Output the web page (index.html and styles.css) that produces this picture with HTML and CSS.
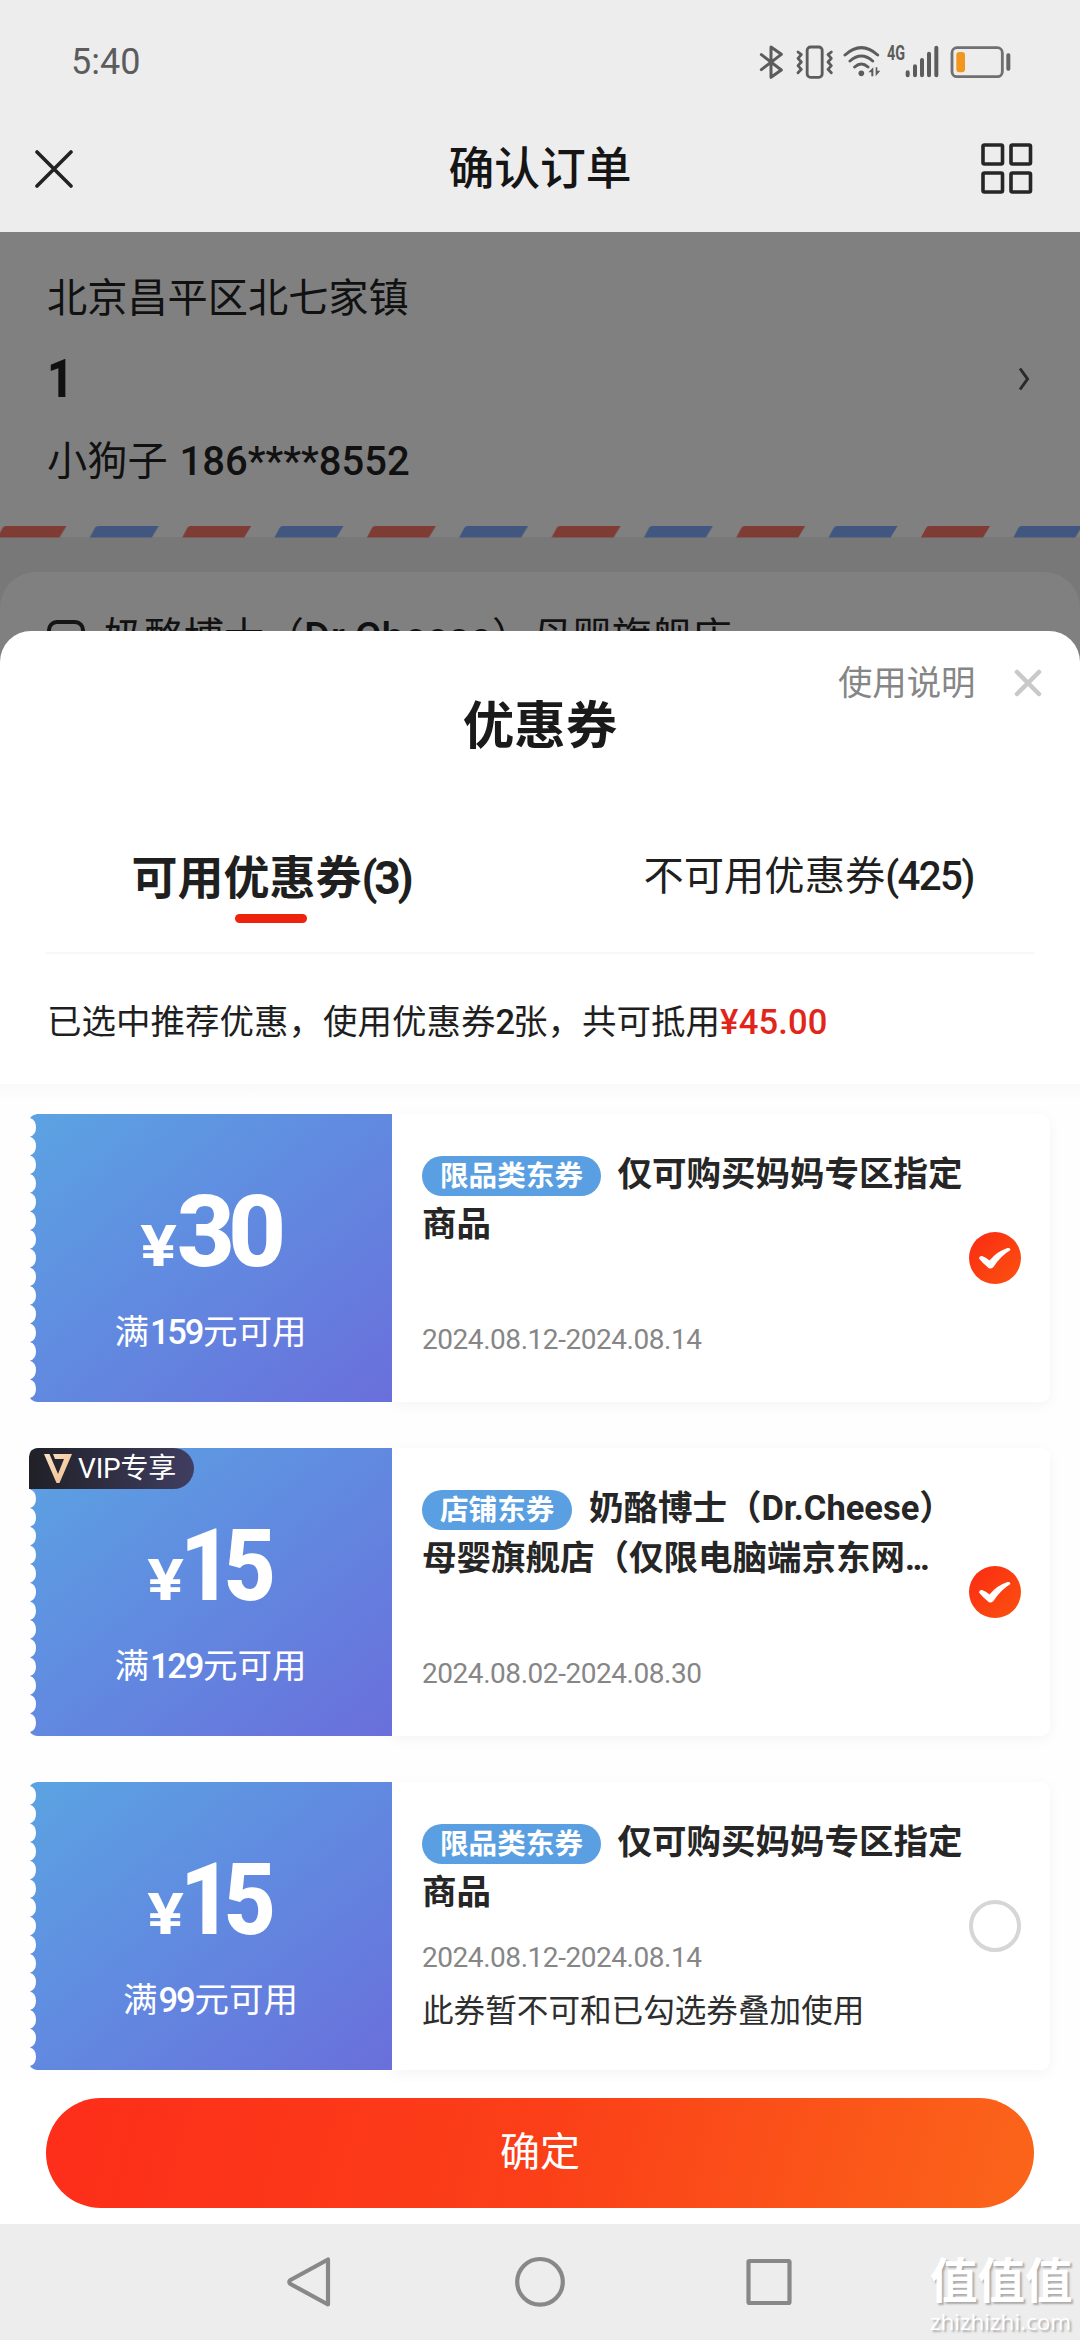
FILE: index.html
```html
<!DOCTYPE html>
<html lang="zh-CN">
<head>
<meta charset="utf-8">
<title>确认订单</title>
<link rel="stylesheet" href="styles.css">
</head>
<body>
<svg class="defs" width="0" height="0" aria-hidden="true">
  <defs>
    <linearGradient id="ticketFill" x1="0" y1="0" x2="1" y2="1">
      <stop offset="0" stop-color="#5ba3e2"/>
      <stop offset="0.5" stop-color="#6189e0"/>
      <stop offset="1" stop-color="#6a6fdb"/>
    </linearGradient>
    <linearGradient id="checkFill" x1="0" y1="0" x2="1" y2="1">
      <stop offset="0" stop-color="#fb2a12"/>
      <stop offset="1" stop-color="#fb5210"/>
    </linearGradient>
    <linearGradient id="vipFill" x1="0" y1="0" x2="1" y2="1">
      <stop offset="0" stop-color="#fbe3c4"/>
      <stop offset="1" stop-color="#eebb8c"/>
    </linearGradient>
    <symbol id="ticket" viewBox="0 0 363 288">
      <path fill="url(#ticketFill)" d="M8 0H363V288H8Q3 287 1 284q6-2 6-9.3t-6-9.3q6-2 6-9.4t-6-9.3q6-2 6-9.3t-6-9.4q6-2 6-9.3t-6-9.3q6-2 6-9.4t-6-9.3q6-2 6-9.3t-6-9.4q6-2 6-9.3t-6-9.3q6-2 6-9.4t-6-9.3q6-2 6-9.3t-6-9.4q6-2 6-9.3t-6-9.3q6-2 6-9.4t-6-9.3q6-2 6-9.3t-6-9.4q6-2 6-9.3t-6-9.3q6-2 6-9.4t-6-9.3q6-2 6-9.3t-6-9.3Q3 1 8 0Z"/>
    </symbol>
    <symbol id="check" viewBox="0 0 52 52">
      <circle cx="26" cy="26" r="26" fill="url(#checkFill)"/>
      <path fill="#fff" d="M10 26.500q0-3 3-2.500 4 1 7.500 4.500 8-9.500 18-12.500 3-.5 3 2-10 6-17 17-3.500 3-6 0-5-4-8.500-8.500Z"/>
    </symbol>
  </defs>
</svg>

<div class="screen">
  <header class="top">
    <div class="status">
      <span class="clock">5:40</span>
      <div class="status-icons">
        <svg width="27" height="36" viewBox="110 70 81 108" fill="none" stroke="#5c5c5c" stroke-width="9" stroke-linecap="round" stroke-linejoin="round"><path d="M120 102L180 148 149 170V79L180 101 120 147"/></svg>
        <svg class="vibrate" width="40" height="36" viewBox="220 70 120 108" fill="none" stroke="#5c5c5c" stroke-width="8.500" stroke-linecap="round" stroke-linejoin="round"><rect x="256.500" y="79" width="45" height="91" rx="10"/><path d="M229 94l10 8-10 11 10 11-10 11 10 11-10 10M329 94l-10 8 10 11-10 11 10 11-10 11 10 10"/></svg>
        <svg class="wifi" width="40" height="36" viewBox="362 70 120 108"><g fill="none" stroke="#5c5c5c" stroke-width="9" stroke-linecap="round"><path d="M371 103Q420 59 469 103M386 121Q420 91 454 121M400 139Q420 121 440 139"/></g><circle cx="420" cy="158" r="8.500" fill="#5c5c5c"/><path d="M456 140v27h-6v-12h-9ZM463 167v-27h5v10h9Z" fill="#5c5c5c"/></svg>
        <span class="net">4G</span>
        <svg class="signal" width="34" height="36" viewBox="552 70 102 108" stroke="#5c5c5c" stroke-width="12" stroke-linecap="round"><path d="M560 155v9M582 137v27M603 118v46M624 99v65M646 81v83"/></svg>
        <svg class="battery" width="62" height="36" viewBox="688 70 186 108"><rect x="694" y="81" width="151" height="87" rx="15" fill="none" stroke="#707070" stroke-width="8.500"/><rect x="707" y="94" width="26" height="61" rx="9" fill="#f3961e"/><rect x="857" y="98" width="12" height="52" rx="5" fill="#666"/></svg>
      </div>
    </div>
    <div class="navbar">
      <svg width="38" height="38" viewBox="0 0 38 38" fill="none" stroke="#222" stroke-width="3.600" stroke-linecap="round"><path d="M2 2L36 36M36 2L2 36"/></svg>
      <h1>确认订单</h1>
      <svg width="52" height="52" viewBox="0 0 52 52" fill="none" stroke="#262626" stroke-width="3.600"><rect x="2" y="2" width="19.500" height="19" rx="1.500"/><rect x="30" y="2" width="19.500" height="19" rx="1.500"/><rect x="2" y="30" width="19.500" height="19" rx="1.500"/><rect x="30" y="30" width="19.500" height="19" rx="1.500"/></svg>
    </div>
  </header>

  <section class="backdrop">
    <div class="address">
      <div class="region">北京昌平区北七家镇</div>
      <div class="door"><b>1</b>
        <svg width="12" height="24" viewBox="0 0 12 24" fill="none" stroke="#2a2a2a" stroke-width="3"><path d="M2 1.500L9.500 12 2 22.500"/></svg>
      </div>
      <div class="person">小狗子 <b>186****8552</b></div>
      <svg class="airmail" width="1080" height="12" viewBox="0 0 1080 12">
        <defs><pattern id="mail" x="-2.500" width="184.700" height="12" patternUnits="userSpaceOnUse"><path fill="#7f3c35" d="M0 11.500L5 2Q6 0 8.500 0H69L62 11.500Z"/><path fill="#425780" d="M92.300 11.500L97.300 2Q98.300 0 100.800 0H161.300L154.300 11.500Z"/></pattern></defs>
        <rect width="1080" height="12" fill="url(#mail)"/>
      </svg>
    </div>
    <div class="shop"><span class="box"></span>奶酪博士（<i>Dr.Cheese</i>）母婴旗舰店</div>
  </section>

  <main class="sheet">
    <div class="sheet-tools"><span>使用说明</span>
      <svg width="28" height="28" viewBox="0 0 28 28" stroke="#c9c9c9" stroke-width="4.500" stroke-linecap="round"><path d="M3 3L25 25M25 3L3 25"/></svg>
    </div>
    <h2>优惠券</h2>
    <nav class="tabs">
      <div class="tab active">可用优惠券<span>(3)</span></div>
      <div class="tab">不可用优惠券<span>(425)</span></div>
    </nav>
    <p class="summary">已选中推荐优惠，使用优惠券<span>2</span>张，共可抵用<strong>¥45.00</strong></p>

    <div class="list">
      <article class="coupon">
        <div class="value">
          <svg class="shape" width="363" height="288"><use href="#ticket"/></svg>
          <div class="amount"><small>¥</small><b>30</b></div>
          <div class="rule">满<i>159</i>元可用</div>
        </div>
        <div class="info">
          <div class="text">
            <h3><em>限品类东券</em>仅可购买妈妈专区指定<br>商品</h3>
            <time>2024.08.12-2024.08.14</time>
          </div>
          <svg class="pick" width="52" height="52"><use href="#check"/></svg>
        </div>
      </article>

      <article class="coupon">
        <div class="value">
          <svg class="shape" width="363" height="288"><use href="#ticket"/></svg>
          <div class="vip"><svg width="28" height="29" viewBox="0 0 28 29"><path fill="url(#vipFill)" d="M0 0H5.500L14 20 20 5H11L9 0H28L15.500 29H12.500Z"/></svg>VIP专享</div>
          <div class="amount narrow"><small>¥</small><b>15</b></div>
          <div class="rule">满<i>129</i>元可用</div>
        </div>
        <div class="info">
          <div class="text">
            <h3><em>店铺东券</em>奶酪博士（Dr.Cheese）<br>母婴旗舰店（仅限电脑端京东网<span class="more">...</span></h3>
            <time>2024.08.02-2024.08.30</time>
          </div>
          <svg class="pick" width="52" height="52"><use href="#check"/></svg>
        </div>
      </article>

      <article class="coupon">
        <div class="value">
          <svg class="shape" width="363" height="288"><use href="#ticket"/></svg>
          <div class="amount narrow"><small>¥</small><b>15</b></div>
          <div class="rule">满<i>99</i>元可用</div>
        </div>
        <div class="info">
          <div class="text with-note">
            <h3><em>限品类东券</em>仅可购买妈妈专区指定<br>商品</h3>
            <time>2024.08.12-2024.08.14</time>
            <p class="note">此券暂不可和已勾选券叠加使用</p>
          </div>
          <span class="pick ring"></span>
        </div>
      </article>
    </div>

    <div class="footer"><button class="confirm">确定</button></div>
  </main>

  <footer class="keys">
    <svg width="1080" height="60" viewBox="0 2252 1080 60" fill="none" stroke="#888" stroke-width="4.200" stroke-linejoin="round"><path d="M328 2259.500V2304.500L290.500 2284Q288 2282 290.500 2280Z"/><circle cx="540" cy="2281.800" r="22.800"/><rect x="748.500" y="2261" width="41" height="42" rx="1"/></svg>
    <div class="mark"><b>值值值</b><span>zhizhizhi.com</span></div>
  </footer>
</div>
</body>
</html>
```
FILE: styles.css
```css
* { box-sizing: border-box; margin: 0; padding: 0; }
body {
  width: 1080px;
  font-family: Roboto, "Noto Sans CJK SC", sans-serif;
  color: #1f1f1f;
  background: #fff;
}
i, em { font-style: normal; }
svg { display: block; flex: none; }
.defs { position: absolute; }
.screen { width: 1080px; height: 2340px; display: flex; flex-direction: column; overflow: hidden; }

/* status bar and title */
.top { height: 232px; background: #ededed; }
.status { height: 123px; padding: 0 68px 0 71px; display: flex; align-items: center; justify-content: space-between; }
.clock { font-size: 36px; line-height: 40px; color: #5c5c5c; }
.status-icons { display: flex; }
.vibrate { margin-left: 10px; }
.wifi { margin-left: 7px; }
.net { width: 17px; margin-left: 5px; margin-right: 1px; font-size: 20px; line-height: 19px; font-weight: 700; color: #5c5c5c; white-space: nowrap; transform: scaleX(.72); transform-origin: 0 0; }
.battery { margin-left: 11px; }
.navbar { height: 92px; padding: 0 47px 0 35px; display: grid; grid-template-columns: 52px 1fr 52px; align-items: center; }
.navbar h1 { font-size: 45.800px; line-height: 60px; font-weight: 500; text-align: center; padding: 2px 0 0 12px; color: #151515; }

/* dimmed order page */
.backdrop { height: 431px; background: #787878; flex: none; overflow: hidden; color: #111; }
.address { height: 305px; background: #808080; padding-top: 37px; }
.region, .person { padding-left: 47px; font-size: 40.200px; line-height: 60px; }
.door { height: 76px; margin: 12px 50px 0 47px; display: flex; align-items: center; justify-content: space-between; font-size: 54px; line-height: 76px; }
.door b { font-weight: 800; transform: scaleX(.85); transform-origin: 0 50%; }
.person { margin-top: 15px; white-space: nowrap; }
.person b { font-weight: 500; font-size: 40px; margin-left: 2px; letter-spacing: 0; }
.airmail { margin-top: 33.500px; }
.shop { height: 140px; margin-top: 35px; padding: 36px 0 0 47px; border-radius: 36px 36px 0 0; background: #808080; font-size: 40px; line-height: 60px; display: flex; }
.shop i { font-weight: 500; letter-spacing: .7px; }
.box { width: 38px; height: 38px; margin: 12px 19px 0 0; border: 4px solid #151515; border-radius: 10px; }

/* coupon sheet */
.sheet { flex: none; height: 1593px; margin-top: -32px; background: #fff; border-radius: 31px 31px 0 0; display: flex; flex-direction: column; position: relative; overflow: hidden; }
.sheet-tools { height: 60px; margin-top: 22px; padding-right: 38px; display: flex; justify-content: flex-end; align-items: center; gap: 38.500px; font-size: 34.400px; line-height: 60px; color: #868686; }
.sheet h2 { margin-top: -16px; height: 60px; font-size: 51.500px; line-height: 60px; font-weight: 700; text-align: center; color: #1a1a1a; }
.tabs { height: 133px; margin: 64px 45px 0; padding-top: 26px; display: grid; grid-template-columns: 452px 1fr; border-bottom: 2px solid #f8f8f8; }
.tab { font-size: 40.300px; line-height: 60px; text-align: center; white-space: nowrap; }
.tab:last-child { padding-left: 85px; }
.tab span { font-weight: 500; letter-spacing: -1.700px; }
.tab.active { font-size: 46px; font-weight: 700; line-height: 62px; }
.tab.active span { font-weight: 700; letter-spacing: -3.200px; }
.tab.active::after { content: ""; display: block; width: 72px; height: 9px; margin: 5px auto 0; border-radius: 5px; background: #ee230d; }
.summary { height: 130px; padding-left: 47px; font-size: 34.500px; line-height: 137px; white-space: nowrap; }
.summary span { font-weight: 500; letter-spacing: -2px; }
.summary strong { font-weight: 500; color: #e1251b; letter-spacing: .2px; }

.list { height: 997px; padding: 30px 29px 0; display: flex; flex-direction: column; gap: 46px; background: linear-gradient(#f9f9f9, #fefefe 16px); overflow: hidden; }
.coupon { flex: none; height: 288px; display: flex; }
.value { position: relative; width: 363px; color: #fff; text-align: center; }
.shape { position: absolute; left: 0; top: 0; }
.amount, .rule, .vip { position: relative; }
.amount { height: 100px; margin-top: 68px; display: flex; justify-content: center; align-items: baseline; line-height: 100px; }
.amount small { font-size: 58px; font-weight: 700; transform: translateX(-2px) scaleX(1.18); }
.amount b { font-size: 101px; font-weight: 800; letter-spacing: -7px; margin-left: 1px; margin-right: -3px; }
.narrow small { transform: translateX(2px) scaleX(1.18); }
.narrow b { letter-spacing: -10px; transform: scaleX(.9); transform-origin: 0 50%; }
.rule { margin-top: 24px; font-size: 34.500px; line-height: 52px; }
.rule i { font-weight: 500; letter-spacing: -2.200px; margin: 0 1px; }
.vip { width: 165px; height: 41px; margin-bottom: -41px; padding-left: 15px; display: flex; align-items: center; gap: 6px; border-radius: 9px 21px 21px 0; background: linear-gradient(90deg, #202027, #403e61); font-size: 28px; line-height: 41px; letter-spacing: -.2px; white-space: nowrap; }
.info { width: 658px; padding: 35px 29px 0 30px; display: flex; justify-content: space-between; background: #fff; border-radius: 0 9px 9px 0; box-shadow: 0 3px 14px rgba(0, 0, 0, .045); }
.text { width: 560px; height: 240px; }
.text h3 { font-size: 34.500px; line-height: 50px; font-weight: 700; color: #262626; white-space: nowrap; }
.text em { display: inline-block; height: 40px; margin-right: 16.500px; padding: 0 18px; border-radius: 20px; background: #5a9fe1; color: #fff; font-size: 28.600px; line-height: 40px; }
.more { letter-spacing: -2.500px; }
.text time { display: block; margin-top: 71px; font-size: 28px; line-height: 40px; color: #868686; letter-spacing: -.45px; }
.text.with-note time { margin-top: 21px; }
.note { margin-top: 12px; font-size: 31.600px; line-height: 44px; color: #2e2e2e; }
.pick { margin-top: 83px; }
.ring { width: 52px; height: 52px; border: 4px solid #d6d6d6; border-radius: 50%; flex: none; }
.footer { height: 143px; padding: 17px 46px 0; background: #fff; }
.confirm { display: block; width: 988px; height: 110px; border: 0; border-radius: 55px; background: linear-gradient(105deg, #fd2d1a, #fb3f18 50%, #fb651a); color: #fff; font: 400 40px/110px Roboto, "Noto Sans CJK SC", sans-serif; }

/* system keys */
.keys { position: relative; height: 116px; padding-top: 28px; background: #ededed; }
.mark { position: absolute; left: 930px; top: 31px; color: #fff; text-shadow: 2px 2px 2px #aaa; white-space: nowrap; }
.mark b { display: block; font-size: 47.500px; line-height: 55px; }
.mark span { display: block; font: 400 22.500px/24px "Open Sans", sans-serif; }
```
